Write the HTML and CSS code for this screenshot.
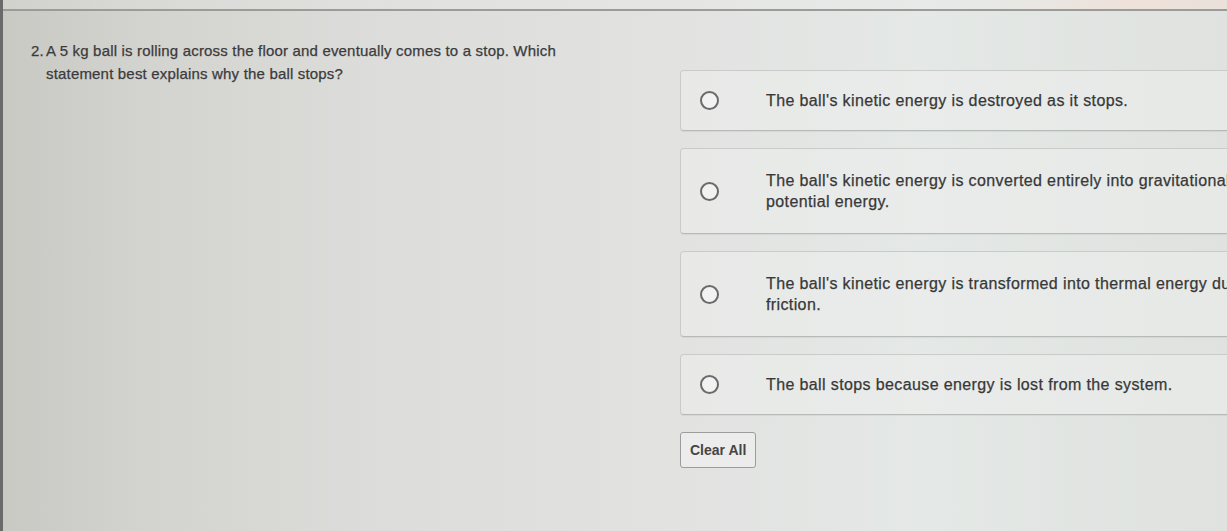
FILE: index.html
```html
<!DOCTYPE html>
<html lang="en">
<head>
<meta charset="utf-8">
<title>Question 2</title>
<link rel="stylesheet" href="styles.css">
</head>
<body>
  <div class="page">
    <div class="rule"></div>
    <main class="question">
      <section class="prompt">
        <span class="num">2.</span>
        <p class="stem">A 5 kg ball is rolling across the floor and eventually comes to a stop. Which statement best explains why the ball stops?</p>
      </section>
      <section class="answers">
        <label class="choice single">
          <span class="radio"></span>
          <span class="text">The ball's kinetic energy is destroyed as it stops.</span>
        </label>
        <label class="choice">
          <span class="radio"></span>
          <span class="text">The ball's kinetic energy is converted entirely into gravitational<br>potential energy.</span>
        </label>
        <label class="choice">
          <span class="radio"></span>
          <span class="text">The ball's kinetic energy is transformed into thermal energy due to<br>friction.</span>
        </label>
        <label class="choice single">
          <span class="radio"></span>
          <span class="text">The ball stops because energy is lost from the system.</span>
        </label>
        <button class="clear" type="button">Clear All</button>
      </section>
    </main>
  </div>
</body>
</html>
```

FILE: styles.css
```css
html, body {
  margin: 0;
  height: 100%;
  overflow: hidden;
}

body {
  font-family: "Liberation Sans", Arial, sans-serif;
  color: #353535;
  background:
    linear-gradient(90deg, #c9c9c4 0%, #d3d3cf 12%, #dcdcda 30%, #e2e2e1 55%, #e4e8e6 75%, #dfe2df 100%);
}

.page {
  height: 100%;
  border-left: 3px solid #6a6a6a;
  box-sizing: border-box;
}

.rule {
  height: 9px;
  border-bottom: 2px solid #9a9c98;
  background: linear-gradient(90deg, rgba(255,255,255,0.15), rgba(255,255,255,0.1) 80%, rgba(245,225,215,0.7) 92%, rgba(240,225,215,0.6));
}

.question {
  display: grid;
  grid-template-columns: 677px 1fr;
  padding-top: 28px;
}

.prompt {
  display: flex;
  padding-left: 28px;
  font-size: 15px;
  line-height: 23px;
  letter-spacing: 0.18px;
  color: #3b3b3b;
  -webkit-text-stroke: 0.25px #3b3b3b;
}

.num {
  width: 15px;
  flex: none;
}

.stem {
  margin: 0;
  width: 540px;
}

.answers {
  display: flex;
  flex-direction: column;
  gap: 17px;
  padding-top: 31px;
  margin-right: -80px;
}

.choice {
  display: flex;
  align-items: center;
  gap: 47px;
  padding: 21px 19px;
  border: 1px solid #c9cbc9;
  border-bottom-color: #b8bab8;
  border-radius: 4px;
  background: rgba(236, 238, 237, 0.55);
  box-shadow: 0 1px 1px rgba(0,0,0,0.06);
  font-size: 16px;
  line-height: 21px;
  letter-spacing: 0.38px;
  color: #383838;
  -webkit-text-stroke: 0.25px #383838;
  white-space: nowrap;
}

.choice.single {
  padding: 19px 19px;
}

.radio {
  width: 15px;
  height: 15px;
  border: 2px solid #6a6a6a;
  border-radius: 50%;
  flex: none;
  background: #f2f2f2;
}

.clear {
  align-self: flex-start;
  padding: 9px 9px;
  font-family: "Liberation Sans", Arial, sans-serif;
  font-size: 14px;
  font-weight: 700;
  color: #454545;
  background: #ececec;
  border: 1px solid #9c9c9c;
  border-radius: 3px;
}
```
